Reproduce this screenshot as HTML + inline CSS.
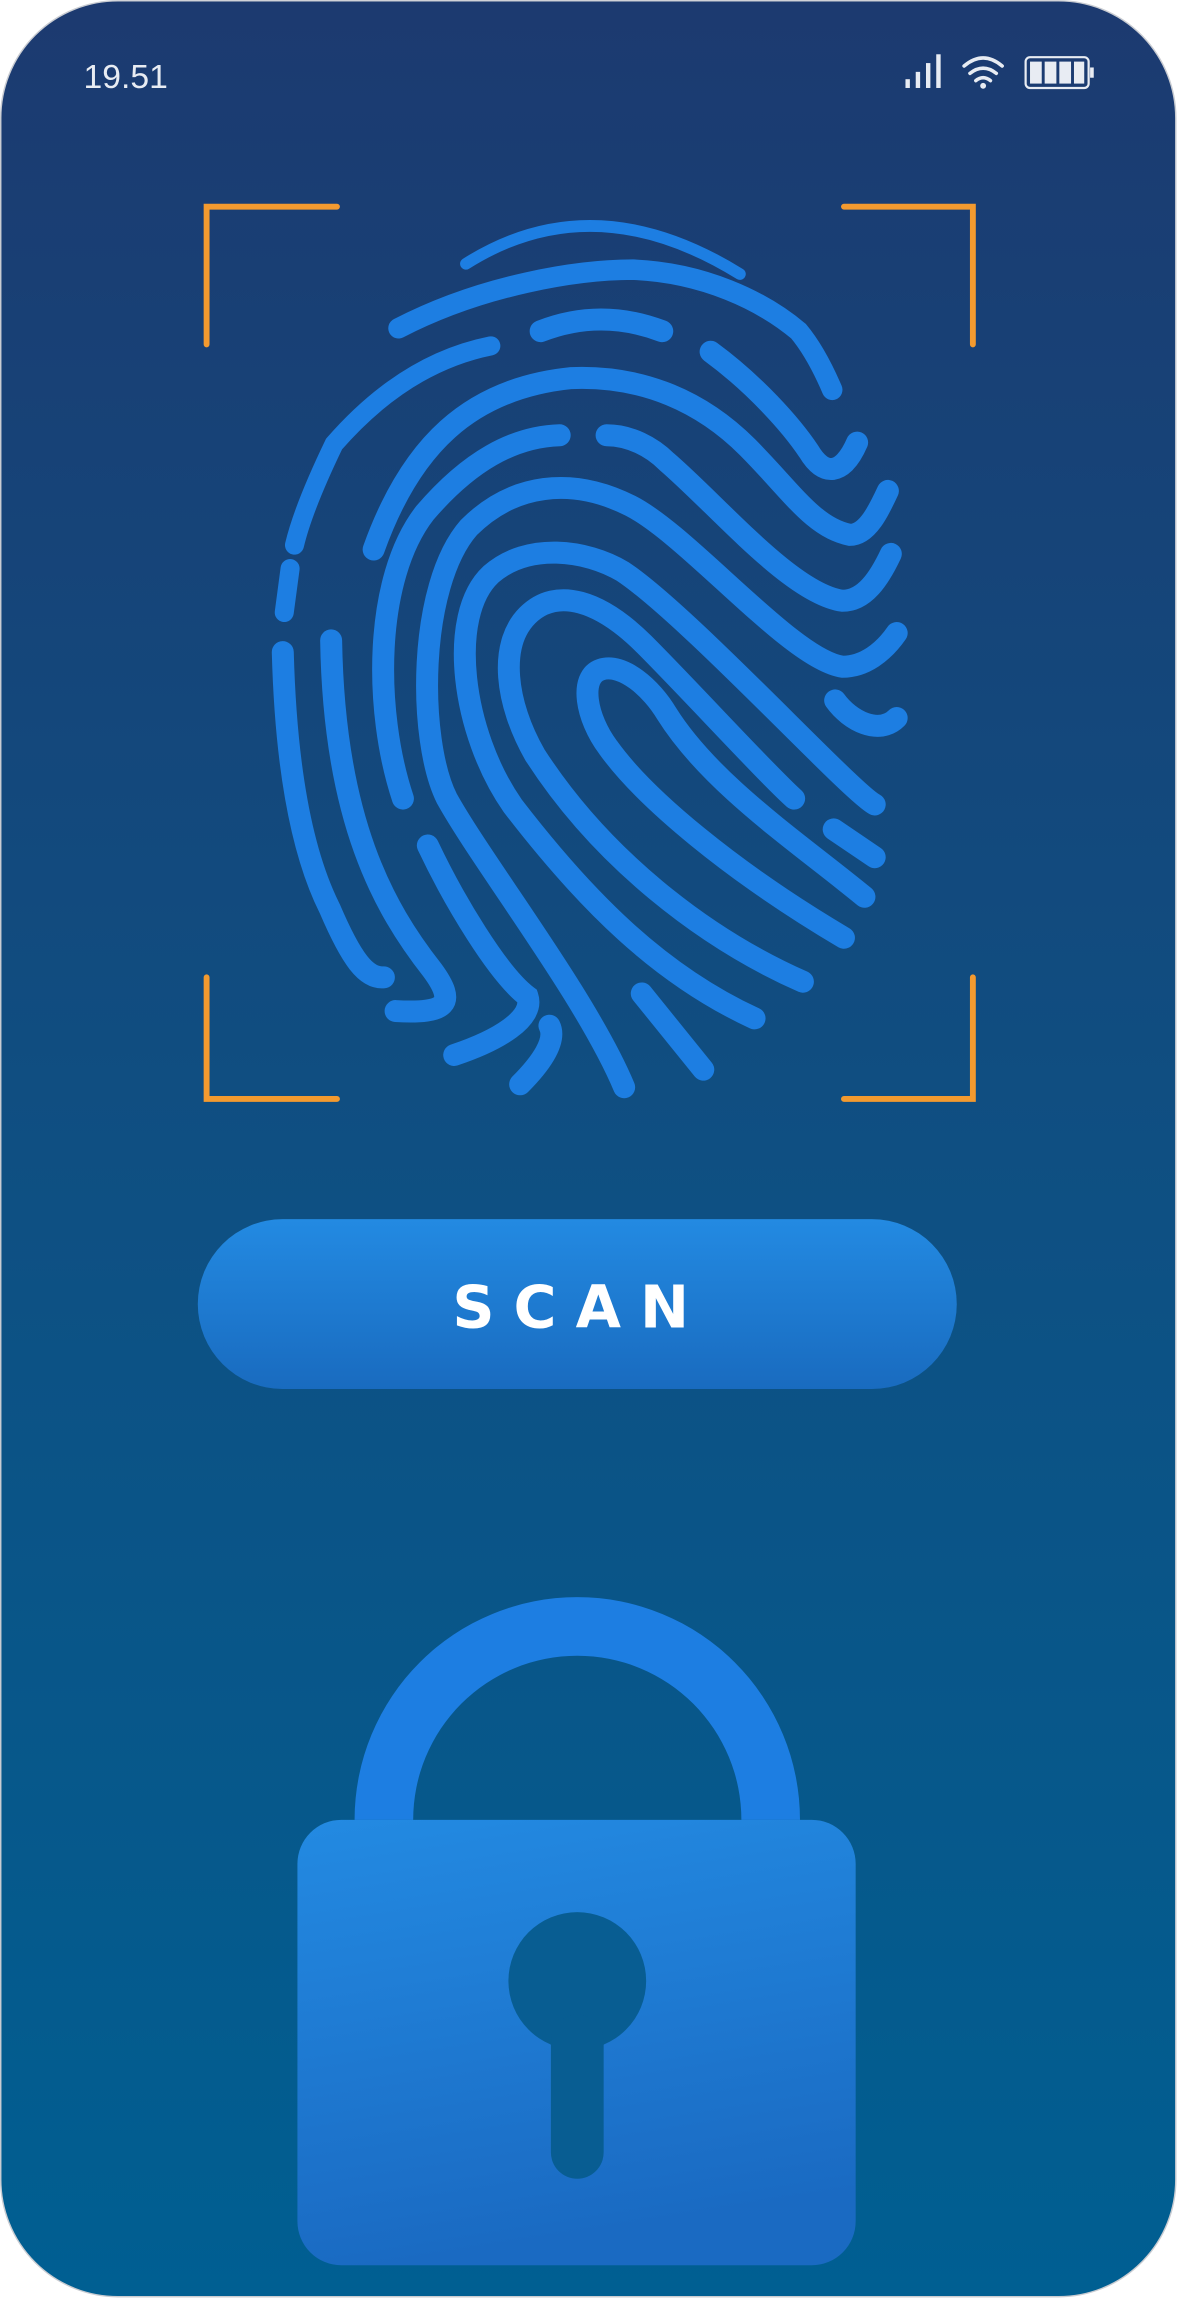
<!DOCTYPE html>
<html><head><meta charset="utf-8"><style>
html,body{margin:0;padding:0;background:#fff;}
svg{display:block;}
</style></head><body>
<svg width="1178" height="2299" viewBox="0 0 804 1569" xmlns="http://www.w3.org/2000/svg">
<defs>
<linearGradient id="bg" x1="0" y1="0" x2="0" y2="1">
<stop offset="0" stop-color="#1c3a70"/><stop offset="0.5" stop-color="#0f4f82"/><stop offset="1" stop-color="#005f92"/>
</linearGradient>
<linearGradient id="btn" x1="0" y1="0" x2="0" y2="1">
<stop offset="0" stop-color="#238ae2"/><stop offset="1" stop-color="#196bbf"/>
</linearGradient>
<linearGradient id="lk" x1="0" y1="0" x2="0.2" y2="1">
<stop offset="0" stop-color="#238ae2"/><stop offset="1" stop-color="#1a6ac2"/>
</linearGradient>
</defs>
<rect x="0.5" y="0.5" width="802" height="1567" rx="80" fill="url(#bg)" stroke="#c9ccd2" stroke-width="1"/>
<text x="57" y="60" font-family="Liberation Sans, sans-serif" font-size="23" fill="#e8ecf3">19.51</text>
<g fill="#e8ecf3">
<rect x="618" y="54" width="3" height="6"/><rect x="625" y="49" width="3" height="11"/><rect x="632" y="43" width="3" height="17"/><rect x="639" y="37" width="3" height="23"/>
</g>
<g fill="none" stroke="#e8ecf3" stroke-width="2.4" stroke-linecap="round">
<path d="M658,45 Q671,34 684,45"/><path d="M662,50 Q671,43 680,50"/><path d="M666,55 Q671,51 676,55"/>
</g>
<circle cx="671" cy="58.5" r="2" fill="#e8ecf3"/>
<rect x="700" y="39" width="43" height="21" rx="3" fill="none" stroke="#e8ecf3" stroke-width="1.5"/>
<rect x="744" y="46" width="2.5" height="7" fill="#e8ecf3"/>
<g fill="#e8ecf3"><rect x="703" y="42" width="8" height="15"/><rect x="713" y="42" width="8" height="15"/><rect x="723" y="42" width="8" height="15"/><rect x="733" y="42" width="7" height="15"/></g>
<g fill="none" stroke="#f39a2f" stroke-width="4" stroke-linecap="round" stroke-linejoin="miter">
<path d="M230,141 H141 V235"/><path d="M576,141 H664 V235"/>
<path d="M141,667 V750 H230"/><path d="M664,667 V750 H576"/>
</g>
<g fill="none" stroke="#1d7ee2" stroke-width="15" stroke-linecap="round">
<path d="M318,180 Q405,125 505,187" stroke-width="8"/>
<path d="M272,224 C330,194 395,184 432,184 C480,186 520,205 545,226 C555,238 562,252 568,266" stroke-width="14"/>
<path d="M369,226 Q410,210 452,226"/>
<path d="M335,236 C290,245 255,272 228,303 C215,330 205,355 201,372" stroke-width="13"/>
<path d="M485,240 C515,262 540,290 552,308 C562,325 575,325 585,302"/>
<path d="M255,375 C280,305 320,265 390,258 C440,256 480,275 510,305 C540,335 555,360 580,365 C592,365 600,348 606,335"/>
<path d="M382,297 C350,298 320,315 290,350 C255,395 255,485 275,545"/>
<path d="M414,297 C430,297 445,305 455,315 C490,345 540,405 575,410 C590,410 600,395 608,378"/>
<path d="M426,742 C400,680 330,590 305,545 C285,505 285,400 320,360 C350,330 390,325 430,345 C470,365 540,450 575,455 C590,455 603,445 612,432"/>
<path d="M515,695 C450,665 400,615 350,550 C315,500 305,420 335,392 C360,370 400,375 425,390 C470,420 580,540 597,549"/>
<path d="M548,670 C480,640 410,585 365,515 C345,480 340,440 360,420 C380,400 410,410 440,440 C470,470 525,530 542,545"/>
<path d="M576,640 C500,595 440,545 415,510 C400,490 395,462 410,457 C425,452 445,470 455,487 C485,535 545,575 590,612"/>
<path d="M569,566 L597,585"/>
<path d="M570,478 C580,492 600,502 612,490"/>
<path d="M198,388 L194,418" stroke-width="13"/>
<path d="M193,445 C195,520 205,580 225,620 C240,655 250,668 262,667"/>
<path d="M226,437 C228,560 262,620 295,662 C312,685 305,692 270,690"/>
<path d="M292,577 C310,615 340,665 360,680 C365,695 340,710 310,720"/>
<path d="M375,700 C380,710 370,725 355,740"/>
<path d="M438,678 L480,730"/>
</g>
<rect x="135" y="832" width="518" height="116" rx="58" fill="url(#btn)"/>
<text x="396" y="906" text-anchor="middle" font-family="DejaVu Sans, sans-serif" font-weight="bold" font-size="40" letter-spacing="13" fill="#fff">SCAN</text>
<path d="M242,1242 A152,152 0 0 1 546,1242 L506,1242 A112,112 0 0 0 282,1242 Z" fill="#1d7ee2"/>
<rect x="203" y="1242" width="381" height="304" rx="30" fill="url(#lk)"/>
<circle cx="394" cy="1352" r="47" fill="#085d92"/>
<rect x="376" y="1375" width="36" height="112" rx="18" fill="#085d92"/>
</svg>
</body></html>
